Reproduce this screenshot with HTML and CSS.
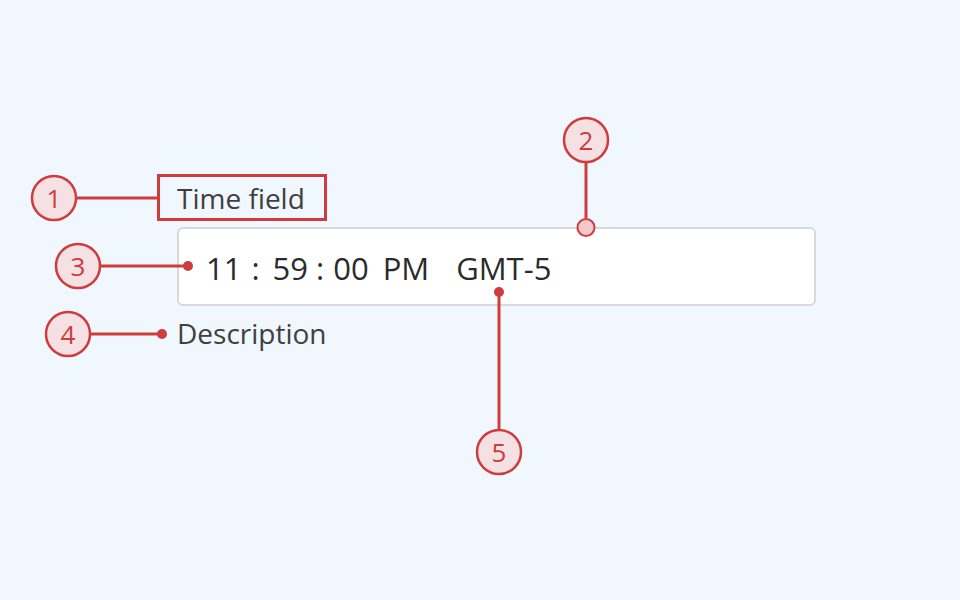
FILE: index.html
```html
<!DOCTYPE html>
<html>
<head>
<meta charset="utf-8">
<link rel="stylesheet" href="styles.css">
</head>
<body>
<div class="canvas">
  <div class="field">
    <div class="label">Time field</div>
    <div class="input">
      <span class="seg">11</span>
      <span class="sep sep1">:</span>
      <span class="seg min">59</span>
      <span class="sep sep2">:</span>
      <span class="seg sec">00</span>
      <span class="seg ampm">PM</span>
      <span class="seg tz">GMT-5</span>
    </div>
    <div class="desc">Description</div>
  </div>
  <svg class="marks" width="960" height="600" viewBox="0 0 960 600">
    <g fill="none" stroke="#d03b3b" stroke-width="3">
      <rect x="158.5" y="175.5" width="167" height="44"/>
      <line x1="76" y1="198" x2="158" y2="198"/>
      <line x1="586" y1="162" x2="586" y2="218"/>
      <line x1="100" y1="266" x2="188" y2="266"/>
      <line x1="90" y1="334" x2="162" y2="334"/>
      <line x1="499" y1="292" x2="499" y2="430"/>
    </g>
    <g fill="#f5e1e3" stroke="#d03b3b" stroke-width="2.5">
      <circle cx="54" cy="198" r="22"/>
      <circle cx="586" cy="140" r="22"/>
      <circle cx="78" cy="266" r="22"/>
      <circle cx="68" cy="334" r="22"/>
      <circle cx="499" cy="452" r="22"/>
      <circle cx="586" cy="227.5" r="8.5" fill="#f1c9cd" stroke-width="2"/>
    </g>
    <g fill="#d03b3b">
      <circle cx="188" cy="266" r="5"/>
      <circle cx="162" cy="334" r="5"/>
      <circle cx="499" cy="292" r="5"/>
    </g>
    <g class="num" fill="#d03b3b" text-anchor="middle">
      <text x="54" y="207.5">1</text>
      <text x="586" y="149.5">2</text>
      <text x="78" y="275.5">3</text>
      <text x="68" y="343.5">4</text>
      <text x="499" y="461.5">5</text>
    </g>
  </svg>
</div>
</body>
</html>
```

FILE: styles.css
```css
html, body {
  margin: 0;
  padding: 0;
}
body {
  background: #f0f7fe;
  font-family: "Open Sans", "Liberation Sans", sans-serif;
}
.canvas {
  position: relative;
  width: 960px;
  height: 600px;
  overflow: hidden;
}
.field {
  padding: 179px 0 0 177px;
  width: 639px;
}
.label {
  font-size: 28px;
  line-height: 38px;
  color: #404040;
}
.input {
  margin-top: 10px;
  height: 73px;
  box-sizing: content-box;
  border: 2px solid #d9d9d9;
  border-radius: 6px;
  background: #ffffff;
  display: flex;
  align-items: center;
  padding: 2px 0 0 27px;
  font-size: 31px;
  line-height: 40px;
  color: #2b2b2b;
}
.sep1 { margin-left: 10px; }
.min { margin-left: 13px; }
.sep2 { margin-left: 8px; }
.sec { margin-left: 9px; }
.ampm { margin-left: 14px; }
.tz { margin-left: 27px; }
.desc {
  margin-top: 8px;
  font-size: 28px;
  line-height: 38px;
  color: #404040;
}
.marks {
  position: absolute;
  left: 0;
  top: 0;
}
.num text {
  font-family: "Open Sans", "Liberation Sans", sans-serif;
  font-size: 26px;
}
```
